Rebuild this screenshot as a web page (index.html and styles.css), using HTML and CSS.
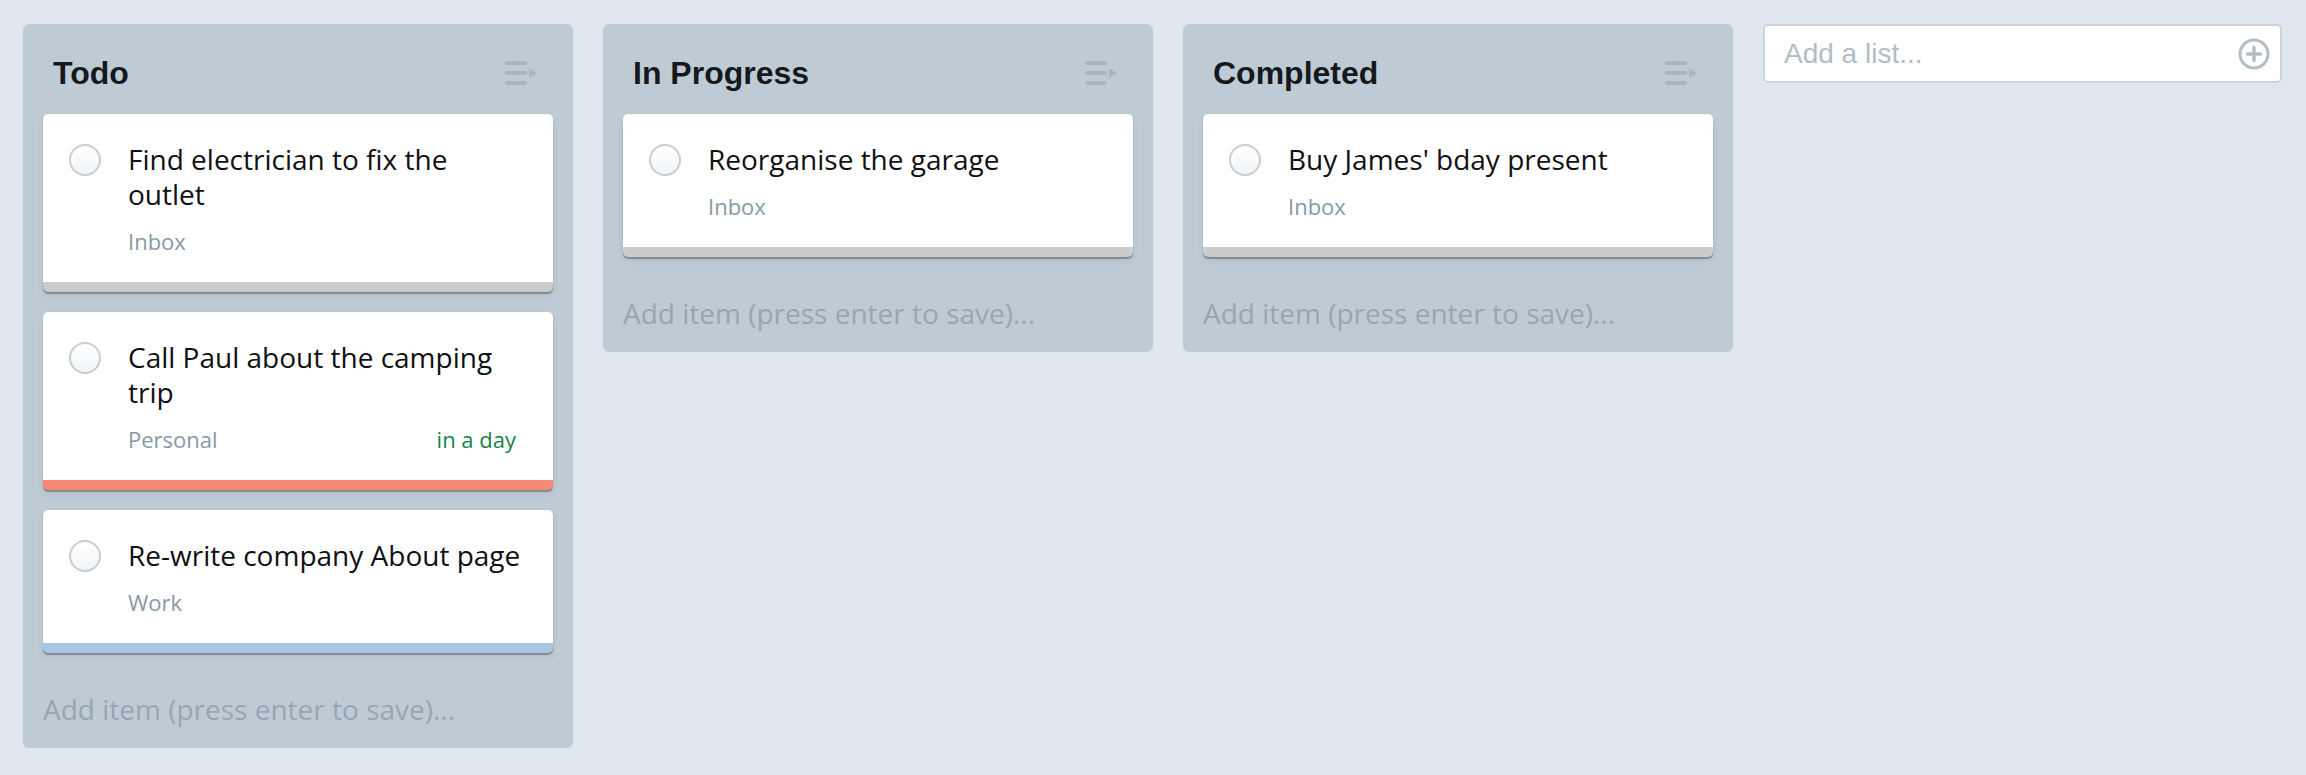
FILE: index.html
```html
<!DOCTYPE html>
<html lang="en">
<head>
<meta charset="utf-8">
<title>Board</title>
<link rel="stylesheet" href="styles.css">
</head>
<body>
<div class="board">
  <section class="column">
    <header class="col-header">
      <h2 class="col-title">Todo</h2>
      <svg class="col-menu" width="32" height="24" viewBox="0 0 32 24"><path d="M2 2H20M2 12H20M2 22H20" stroke="#a9b6c1" stroke-width="4" stroke-linecap="round" fill="none"/><path d="M24 7.2L31 11.2Q32.4 12 31 12.8L24 16.8Z" fill="#a9b6c1"/></svg>
    </header>
    <div class="cards">
      <article class="card bar-grey">
        <span class="check"></span>
        <div class="card-body">
          <div class="card-title">Find electrician to fix the outlet</div>
          <div class="card-meta"><span class="tag">Inbox</span></div>
        </div>
      </article>
      <article class="card bar-red">
        <span class="check"></span>
        <div class="card-body">
          <div class="card-title">Call Paul about the camping trip</div>
          <div class="card-meta"><span class="tag">Personal</span><span class="due">in a day</span></div>
        </div>
      </article>
      <article class="card bar-blue">
        <span class="check"></span>
        <div class="card-body">
          <div class="card-title">Re-write company About page</div>
          <div class="card-meta"><span class="tag">Work</span></div>
        </div>
      </article>
    </div>
    <input class="add-item" type="text" placeholder="Add item (press enter to save)...">
  </section>

  <section class="column">
    <header class="col-header">
      <h2 class="col-title">In Progress</h2>
      <svg class="col-menu" width="32" height="24" viewBox="0 0 32 24"><path d="M2 2H20M2 12H20M2 22H20" stroke="#a9b6c1" stroke-width="4" stroke-linecap="round" fill="none"/><path d="M24 7.2L31 11.2Q32.4 12 31 12.8L24 16.8Z" fill="#a9b6c1"/></svg>
    </header>
    <div class="cards">
      <article class="card bar-grey">
        <span class="check"></span>
        <div class="card-body">
          <div class="card-title">Reorganise the garage</div>
          <div class="card-meta"><span class="tag">Inbox</span></div>
        </div>
      </article>
    </div>
    <input class="add-item" type="text" placeholder="Add item (press enter to save)...">
  </section>

  <section class="column">
    <header class="col-header">
      <h2 class="col-title">Completed</h2>
      <svg class="col-menu" width="32" height="24" viewBox="0 0 32 24"><path d="M2 2H20M2 12H20M2 22H20" stroke="#a9b6c1" stroke-width="4" stroke-linecap="round" fill="none"/><path d="M24 7.2L31 11.2Q32.4 12 31 12.8L24 16.8Z" fill="#a9b6c1"/></svg>
    </header>
    <div class="cards">
      <article class="card bar-grey">
        <span class="check"></span>
        <div class="card-body">
          <div class="card-title">Buy James' bday present</div>
          <div class="card-meta"><span class="tag">Inbox</span></div>
        </div>
      </article>
    </div>
    <input class="add-item" type="text" placeholder="Add item (press enter to save)...">
  </section>

  <div class="add-list">
    <input class="add-list-input" type="text" placeholder="Add a list...">
    <svg class="add-list-icon" width="32" height="32" viewBox="0 0 32 32"><circle cx="16" cy="16" r="14" stroke="#b3bec7" stroke-width="3" fill="none"/><path d="M16 9.5V22.5M9.5 16H22.5" stroke="#b3bec7" stroke-width="3.4" stroke-linecap="round"/></svg>
  </div>
</div>
</body>
</html>
```

FILE: styles.css
```css
html, body {
  margin: 0;
  padding: 0;
}

body {
  background: #dfe6ed;
  font-family: "Open Sans", "Liberation Sans", sans-serif;
  color: #141618;
}

.board {
  display: flex;
  align-items: flex-start;
  gap: 30px;
  padding: 24px 23px;
}

.column {
  width: 550px;
  box-sizing: border-box;
  background: #bfcbd4;
  border-radius: 6px;
  padding: 20px 20px 20px;
  display: flex;
  flex-direction: column;
}

.col-header {
  display: flex;
  align-items: center;
  justify-content: space-between;
  padding: 11px 16px 0 10px;
  margin-bottom: 23px;
}

.col-title {
  margin: 0;
  font-family: "Liberation Sans", Arial, sans-serif;
  font-weight: 700;
  font-size: 32px;
  line-height: 36px;
  color: #16191c;
}

.col-menu {
  display: block;
}

.cards {
  display: flex;
  flex-direction: column;
  gap: 20px;
}

.card {
  display: flex;
  align-items: flex-start;
  gap: 27px;
  background: #ffffff;
  border-radius: 5px;
  padding: 28px 30px 24px 26px;
  border-bottom: 10px solid #cbcbcb;
  box-shadow: 0 0 1px rgba(0, 0, 0, 0.15), 0 2px 1px rgba(0, 0, 0, 0.28), 0 4px 8px rgba(0, 0, 0, 0.06);
}

.bar-grey { border-bottom-color: #cbcbcb; }
.bar-red { border-bottom-color: #f88a74; }
.bar-blue { border-bottom-color: #a8c6e2; }

.check {
  flex: none;
  width: 32px;
  height: 32px;
  box-sizing: border-box;
  border: 2px solid #c8cdd2;
  border-radius: 50%;
  background: linear-gradient(#ffffff, #f1f4f7);
  margin-top: 2px;
}

.card-body {
  flex: 1;
  min-width: 0;
}

.card-title {
  font-size: 28px;
  line-height: 35px;
  color: #0f1113;
}

.card-meta {
  display: flex;
  justify-content: space-between;
  margin-top: 13px;
  margin-right: 7px;
  font-size: 22px;
  line-height: 33px;
}

.tag {
  color: #8898a8;
}

.due {
  color: #17844a;
}

.add-item {
  display: block;
  width: 100%;
  box-sizing: border-box;
  margin: 37px 0 0;
  padding: 0;
  height: 38px;
  border: none;
  outline: none;
  background: transparent;
  font-family: "Open Sans", "Liberation Sans", sans-serif;
  font-size: 28px;
  line-height: 38px;
  color: #141618;
}

.add-item::placeholder {
  color: #97a6b3;
  opacity: 1;
}

.add-list {
  width: 519px;
  height: 59px;
  box-sizing: border-box;
  display: flex;
  align-items: center;
  gap: 8px;
  background: #ffffff;
  border: 2px solid #cdd3d8;
  border-radius: 5px;
  padding: 0 10px 0 19px;
}

.add-list-input {
  flex: 1;
  min-width: 0;
  border: none;
  outline: none;
  padding: 0;
  background: transparent;
  font-family: "Liberation Sans", Arial, sans-serif;
  font-size: 28px;
  line-height: 36px;
  color: #141618;
}

.add-list-input::placeholder {
  color: #b3bdc6;
  opacity: 1;
}

.add-list-icon {
  flex: none;
  display: block;
}
```
